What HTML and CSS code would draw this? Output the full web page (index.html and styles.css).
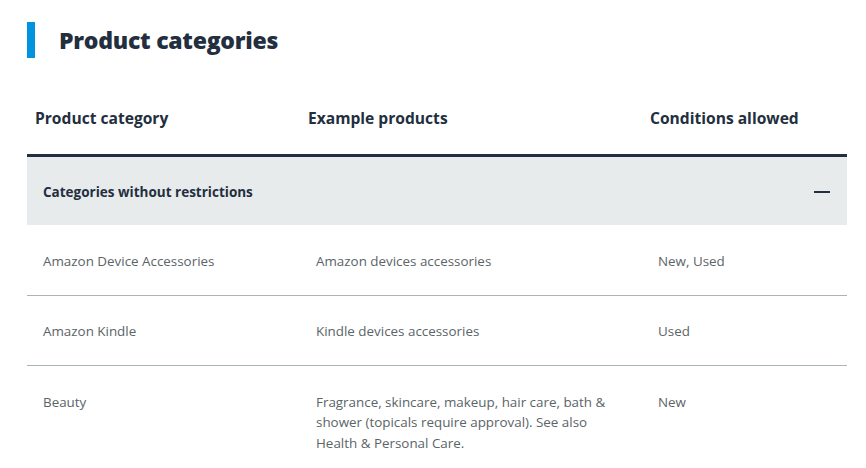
FILE: index.html
```html
<!DOCTYPE html>
<html>
<head>
<meta charset="utf-8">
<link rel="stylesheet" href="styles.css">
</head>
<body>
<div class="page">
  <h2 class="title">Product categories</h2>
  <table class="cats">
    <colgroup>
      <col class="c1"><col class="c2"><col class="c3">
    </colgroup>
    <thead>
      <tr>
        <th>Product category</th>
        <th>Example products</th>
        <th>Conditions allowed</th>
      </tr>
    </thead>
    <tbody>
      <tr class="group">
        <td colspan="3">
          <div class="group-inner">
            <span>Categories without restrictions</span>
            <span class="minus"></span>
          </div>
        </td>
      </tr>
      <tr>
        <td>Amazon Device Accessories</td>
        <td>Amazon devices accessories</td>
        <td>New, Used</td>
      </tr>
      <tr>
        <td>Amazon Kindle</td>
        <td>Kindle devices accessories</td>
        <td>Used</td>
      </tr>
      <tr>
        <td>Beauty</td>
        <td>Fragrance, skincare, makeup, hair care, bath &amp; shower (topicals require approval). See also Health &amp; Personal Care.</td>
        <td>New</td>
      </tr>
    </tbody>
  </table>
</div>
</body>
</html>
```
FILE: styles.css
```css
html, body {
  margin: 0;
  padding: 0;
  background: #fff;
}
body {
  font-family: "Open Sans", "Noto Sans", sans-serif;
  color: #232f3e;
}
.page {
  padding: 22px 19px 0 27px;
}
.title {
  margin: 0;
  border-left: 8px solid #0093e0;
  padding-left: 24px;
  height: 36px;
  line-height: 36px;
  font-size: 23px;
  font-weight: 800;
  color: #232f3e;
  letter-spacing: -0.25px;
}
.cats {
  margin-top: 24px;
  width: 820px;
  border-collapse: collapse;
  table-layout: fixed;
}
.c1 { width: 273px; }
.c2 { width: 342px; }
.c3 { width: 205px; }
.cats th {
  text-align: left;
  font-size: 15.6px;
  font-weight: 700;
  line-height: 20px;
  padding: 26px 8px;
  border-bottom: 3px solid #232f3e;
  color: #232f3e;
}
.cats td {
  font-size: 13.4px;
  line-height: 20.5px;
  color: #5b6467;
  padding: 25.5px 16px 23.5px;
  vertical-align: top;
  border-bottom: 1px solid #aab4b8;
}
.cats .group td {
  background: #e8ebec;
  padding: 25px 16px 23px;
  border-bottom: none;
}
.group-inner {
  display: flex;
  justify-content: space-between;
  align-items: center;
  font-size: 13.5px;
  font-weight: 700;
  line-height: 20px;
  color: #232f3e;
}
.minus {
  width: 16px;
  height: 2px;
  background: #232f3e;
  margin-right: 1px;
}
.cats tbody tr:last-child td {
  border-bottom: none;
}
```
